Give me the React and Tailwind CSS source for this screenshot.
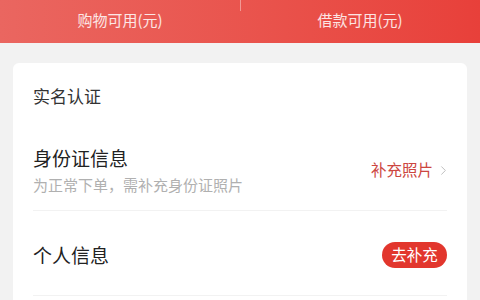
import { ChevronRight } from 'lucide-react';

const font = { fontFamily: '"Noto Sans CJK SC", "Noto Sans", sans-serif' };

export default function App() {
  return (
    <div className="w-[480px] h-[300px] overflow-hidden bg-[#f2f2f2]" style={font}>
      <div className="h-[43px] bg-gradient-to-r from-[#ea6660] to-[#e8403a] grid grid-cols-2 relative">
        <div className="absolute left-[240px] top-0 h-[11px] w-px bg-white/40" />
        <div className="flex items-center justify-center text-[15px] text-white/85 pb-[3px]">购物可用(元)</div>
        <div className="flex items-center justify-center text-[15px] text-white/85 pb-[3px]">借款可用(元)</div>
      </div>
      <div className="mx-[13px] mt-[20px] bg-white rounded-[6px] px-[20px]">
        <div className="text-[17px] leading-[24px] text-[#333] pt-[21px]">实名认证</div>
        <div className="pt-[37px] pb-[15px] border-b border-[#f2f2f2] flex items-center justify-between">
          <div>
            <div className="text-[19px] leading-[26px] text-[#222]">身份证信息</div>
            <div className="text-[15px] leading-[20px] text-[#b0b0b0] mt-[4px]">为正常下单，需补充身份证照片</div>
          </div>
          <div className="flex items-center text-[15.5px] text-[#cc4640] gap-[3px] -mr-[4px]">
            <span>补充照片</span>
            <ChevronRight className="w-[15px] h-[15px] text-[#bbb]" strokeWidth={1.5} />
          </div>
        </div>
        <div className="h-[85px] pt-[3px] border-b border-[#f2f2f2] flex items-center justify-between">
          <div className="text-[19px] leading-[26px] text-[#222]">个人信息</div>
          <div className="h-[26px] w-[65px] rounded-full bg-[#e2362d] text-white text-[15.5px] flex items-center justify-center">去补充</div>
        </div>
        <div className="h-[40px]" />
      </div>
    </div>
  );
}
